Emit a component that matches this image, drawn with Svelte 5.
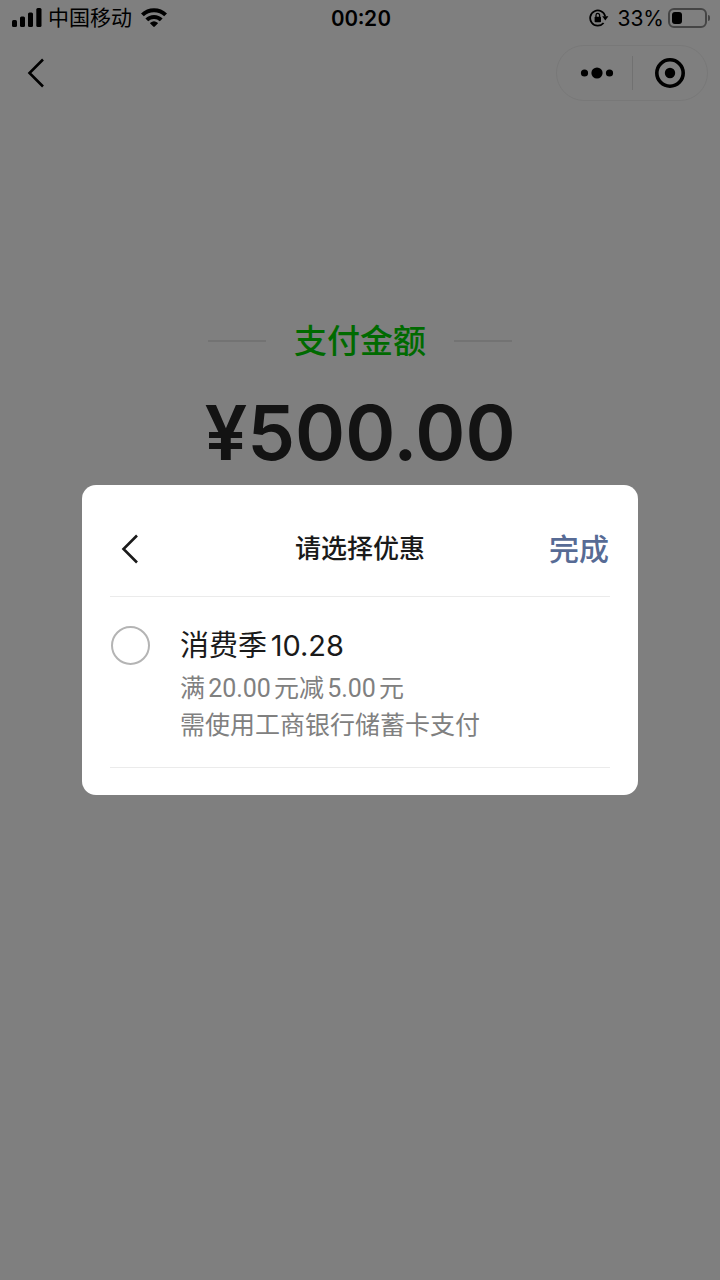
<script lang="ts">
	type Coupon = {
		id: string;
		name: string;
		lines: string[];
	};

	const carrier = '中国移动';
	const time = '00:20';
	const battery = 33;
	const amount = '¥500.00';

	const coupons: Coupon[] = [
		{
			id: 'season-1028',
			name: '消费季10.28',
			lines: ['满20.00元减5.00元', '需使用工商银行储蓄卡支付']
		}
	];

	let selected = $state('');
</script>

{#snippet chevron()}
	<svg class="chevron" viewBox="0 0 18 32" aria-hidden="true">
		<path d="M16 2.5 2.5 16 16 29.5" fill="none" stroke="currentColor" stroke-width="2.6" />
	</svg>
{/snippet}

<main class="page">
	<header class="status">
		<div class="side">
			<svg class="signal" viewBox="0 0 30 20" aria-hidden="true">
				<rect x="0" y="12" width="5" height="7" rx="1.5" />
				<rect x="8" y="8.5" width="5" height="10.5" rx="1.5" />
				<rect x="16" y="4.5" width="5" height="14.5" rx="1.5" />
				<rect x="24.3" y="0" width="5.2" height="19" rx="1.5" />
			</svg>
			<span class="carrier">{carrier}</span>
			<svg class="wifi" viewBox="0 0 26 20" aria-hidden="true">
				<g fill="none" stroke="currentColor" stroke-width="4">
					<path d="M1.4 6.9a16.6 16.6 0 0 1 23.2 0" />
					<path d="M5.8 11.9a10.2 10.2 0 0 1 14.4 0" />
				</g>
				<path d="M12.2 18.6 9.2 15.6q-.4-.5.1-.9a5.8 5.8 0 0 1 7.4 0q.5.4.1.9l-3 3q-.8.7-1.6 0z" />
			</svg>
		</div>
		<time>{time}</time>
		<div class="side end">
			<svg class="lock" viewBox="0 0 20 18" aria-hidden="true">
				<path
					d="M16.2 7.4A7.6 7.6 0 1 0 14.6 14"
					fill="none"
					stroke="currentColor"
					stroke-width="1.8"
				/>
				<path d="M13.2 7.2h6.2l-3.1 4.3z" />
				<rect x="5.6" y="7.8" width="6.4" height="5.4" rx=".8" />
				<path d="M7 8V6.2a1.8 1.8 0 0 1 3.6 0V8" fill="none" stroke="currentColor" stroke-width="1.3" />
			</svg>
			<span class="percent">{battery}%</span>
			<span class="battery"><i style="width: {battery}%"></i></span>
		</div>
	</header>

	<nav>
		<button class="icon" aria-label="返回">{@render chevron()}</button>
		<div class="capsule">
			<button class="more" aria-label="更多">
				<svg viewBox="0 0 34 12" width="34" height="12">
					<circle cx="4.5" cy="6" r="3.6" />
					<circle cx="17" cy="6" r="5.6" />
					<circle cx="29.5" cy="6" r="3.6" />
				</svg>
			</button>
			<button aria-label="关闭">
				<svg viewBox="0 0 30 30" width="30" height="30">
					<circle cx="15" cy="15" r="13.2" fill="none" stroke="currentColor" stroke-width="3.6" />
					<circle cx="15" cy="15" r="5.2" />
				</svg>
			</button>
		</div>
	</nav>

	<section class="payment">
		<h1>支付金额</h1>
		<p class="amount">{amount}</p>
	</section>
</main>

<div class="overlay">
	<div class="dialog" role="dialog" aria-modal="true" aria-labelledby="dialog-title">
		<header>
			<button class="icon" aria-label="返回">{@render chevron()}</button>
			<h2 id="dialog-title">请选择优惠</h2>
			<button class="done">完成</button>
		</header>

		{#each coupons as coupon (coupon.id)}
			<label class="coupon">
				<input type="radio" name="coupon" value={coupon.id} bind:group={selected} />
				<span class="info">
					<span class="name">{coupon.name}</span>
					{#each coupon.lines as line}
						<span class="line">{line}</span>
					{/each}
				</span>
			</label>
		{/each}
	</div>
</div>

<style>
	:global(body) {
		background: #fff;
	}

	.page,
	.overlay {
		font-family: Inter, 'Noto Sans CJK SC', sans-serif;
		text-autospace: normal;
	}

	.page {
		min-height: 100vh;
		color: #000;
	}

	button {
		display: grid;
		place-items: center;
		padding: 0;
		border: 0;
		background: none;
		color: inherit;
		font: inherit;
		cursor: pointer;
	}

	svg {
		display: block;
		fill: currentColor;
	}

	h1,
	h2,
	p {
		margin: 0;
	}

	.status {
		display: grid;
		grid-template-columns: 1fr auto 1fr;
		align-items: center;
		height: 36px;
		padding: 0 10px 0 12px;
	}

	.side {
		display: flex;
		align-items: center;
	}

	.end {
		justify-content: flex-end;
	}

	.signal {
		width: 30px;
		height: 20px;
	}

	.carrier {
		margin: 0 9px 0 6px;
		font-size: 21px;
		line-height: 36px;
	}

	.wifi {
		width: 26px;
		height: 20px;
	}

	time {
		font-size: 21px;
		font-weight: 600;
		font-variant-numeric: tabular-nums;
	}

	.lock {
		width: 20px;
		height: 18px;
	}

	.percent {
		margin: 0 4px 0 8px;
		font-size: 21px;
	}

	.battery {
		position: relative;
		box-sizing: border-box;
		width: 39px;
		height: 20px;
		margin-right: 3px;
		padding: 2px;
		border: 2px solid #8a8a8a;
		border-radius: 6px;
	}

	.battery i {
		display: block;
		height: 100%;
		border-radius: 3px;
		background: #000;
	}

	.battery::after {
		content: '';
		position: absolute;
		top: 5px;
		right: -5px;
		width: 2px;
		height: 6px;
		border-radius: 0 3px 3px 0;
		background: #8a8a8a;
	}

	nav {
		display: flex;
		align-items: center;
		justify-content: space-between;
		height: 74px;
		padding: 0 12px 0 16px;
	}

	.icon {
		width: 40px;
		height: 40px;
	}

	.chevron {
		width: 18px;
		height: 32px;
	}

	.capsule {
		display: grid;
		grid-template-columns: 1fr 1fr;
		align-items: center;
		box-sizing: border-box;
		width: 152px;
		height: 56px;
		border: 1px solid #f0f0f0;
		border-radius: 28px;
	}

	.capsule button {
		height: 34px;
	}

	.capsule .more {
		padding-left: 4px;
	}

	.capsule button + button {
		border-left: 1px solid #e2e2e2;
	}

	.payment {
		display: flex;
		flex-direction: column;
		align-items: center;
		padding-top: 207px;
	}

	h1 {
		display: flex;
		align-items: center;
		gap: 28px;
		color: #00d400;
		font-size: 33px;
		font-weight: 500;
		line-height: 48px;
	}

	h1::before,
	h1::after {
		content: '';
		width: 58px;
		height: 2px;
		background: #e6e6e6;
	}

	.amount {
		margin-top: 19px;
		color: #262626;
		font-size: 76px;
		font-weight: 600;
		line-height: 96px;
	}

	.overlay {
		position: fixed;
		inset: 0;
		display: flex;
		align-items: center;
		justify-content: center;
		padding: 0 82px;
		background: rgba(0, 0, 0, 0.5);
	}

	.dialog {
		flex: 1;
		max-width: 600px;
		box-sizing: border-box;
		padding: 0 28px 27px;
		border-radius: 14px;
		background: #fff;
		color: #1a1a1a;
	}

	.dialog header {
		display: grid;
		grid-template-columns: 1fr auto 1fr;
		align-items: center;
		height: 112px;
		padding-top: 16px;
		box-sizing: border-box;
		border-bottom: 1px solid #ebebeb;
	}

	h2 {
		font-size: 26px;
		font-weight: 500;
		line-height: 40px;
	}

	.done {
		justify-self: end;
		margin-right: 1px;
		color: #576b95;
		font-size: 30px;
		font-weight: 500;
		line-height: 40px;
	}

	.coupon {
		display: flex;
		align-items: flex-start;
		gap: 30px;
		padding: 29px 0 23px 1px;
		border-bottom: 1px solid #ebebeb;
		cursor: pointer;
	}

	.coupon input {
		appearance: none;
		flex: none;
		box-sizing: border-box;
		width: 39px;
		height: 39px;
		margin: 0;
		border: 2px solid #b4b4b4;
		border-radius: 50%;
	}

	.coupon input:checked {
		border: 12px solid #07c160;
	}

	.info {
		display: flex;
		flex-direction: column;
	}

	.name {
		margin-bottom: 4px;
		font-size: 29px;
		line-height: 40px;
	}

	.line {
		color: #808080;
		font-family: Roboto, 'Noto Sans CJK SC', sans-serif;
		font-size: 25px;
		line-height: 37px;
	}
</style>
